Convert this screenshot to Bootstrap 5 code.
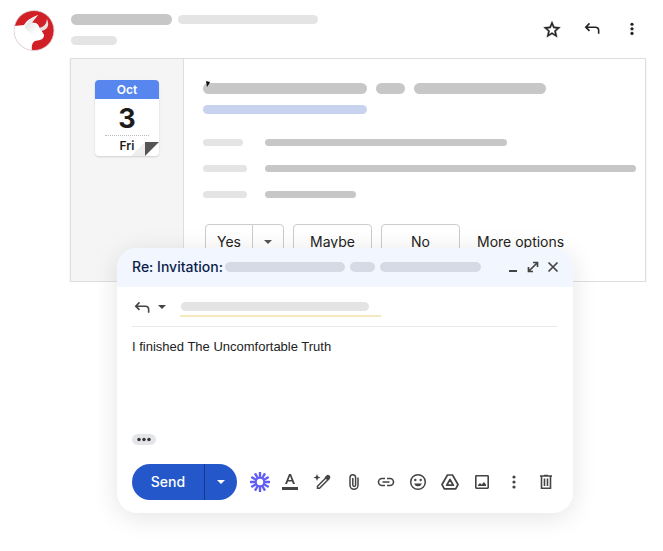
<!DOCTYPE html>
<html lang="en">
<head>
<meta charset="utf-8">
<meta name="viewport" content="width=device-width, initial-scale=1">
<title>Re: Invitation</title>
<link href="https://cdn.jsdelivr.net/npm/bootstrap@5.3.0/dist/css/bootstrap.min.css" rel="stylesheet">
<style>
  body { font-family: Inter, Roboto, sans-serif; font-size: 14px; line-height: 20px; color: #222; background: #fff; }
  svg { display: block; }
  .ico { border: 0; background: none; padding: 0; color: #444; width: 20px; height: 20px; flex: none; }
  .ico svg { width: 20px; height: 20px; fill: currentColor; }
  .mail-head { padding: 10px 21px 7px 13px; gap: 16px; }
  .mail-head .ico { color: #222; }
  .avatar { width: 42px; height: 41px; flex: none; }
  /* redacted text bars */
  .bar { display: block; border-radius: 8px; background: #c7c7c7; height: 11px; min-width: 0; }
  .bar-9 { height: 9px; }
  .bar-7 { height: 7px; }
  .bar-pale { background: #e4e4e4; }
  .bar-blue { background: #c8d3ef; }
  .bar-slate { background: #d5dae5; height: 10px; }
  .w-25px { width: 25px; } .w-29 { width: 29px; } .w-40 { width: 40px; } .w-44 { width: 44px; }
  .w-46 { width: 46px; } .w-91 { width: 91px; } .w-101 { width: 101px; } .w-120 { width: 120px; }
  .w-132 { width: 132px; } .w-140 { width: 140px; } .w-164 { width: 164px; } .w-188 { width: 188px; } .w-242 { width: 242px; }
  .sender { padding-top: 4px; }
  .sender-row { gap: 6px; padding-bottom: 11px; }
  .invite { margin: 0 17px 0 70px; border: 1px solid #dedede; box-shadow: 0 1px 2px #0000001a; }
  .side { width: 113px; flex: none; background: #f5f5f5; border-right: 1px solid #dedede; padding-top: 21px; }
  .cal { width: 64px; height: 76px; border-radius: 4px; background: #fff; box-shadow: 0 1px 2px #00000026; color: #1c1c1c; }
  .cal-month { background: #5787ee; color: #fff; height: 19px; line-height: 20px; font-size: 12px; font-weight: 600; border-radius: 4px 4px 0 0; }
  .cal-day { font-size: 27px; font-weight: 700; line-height: 36px; height: 36px; padding-top: 2px; }
  .cal-week { border-top: 1px dotted #bbb; margin: 0 10px; font-size: 12px; font-weight: 600; line-height: 20px; }
  .fold { position: absolute; right: 0; bottom: 0; }
  .detail { padding: 24px 9px 21px 19px; }
  .subject { gap: 9px; padding-bottom: 11px; }
  .tick { position: absolute; left: 3px; top: -2px; }
  .fields { padding-top: 25px; gap: 19px; }
  .fields dt { width: 62px; margin: 0; }
  .fields dd { margin: 0; min-width: 0; }
  .answers { padding: 26px 0 0 2px; gap: 9px; }
  .rsvp { border: 1px solid #ccc; border-radius: 4px; background: #fff; height: 36px; padding: 0; width: 79px; color: #222; }
  .rsvp-yes { width: 48px; border-radius: 4px 0 0 4px; }
  .rsvp-more { width: 32px; margin-left: -1px; border-radius: 0 4px 4px 0; color: #555; }
  .caret { width: 8px; height: 4px; fill: currentColor; margin: auto; }
  .more { color: #222; margin-left: 8px; }
  .compose { position: absolute; top: 248px; left: 117px; right: 90px; background: #fff; border-radius: 20px; box-shadow: 0 4px 26px #0000001c; }
  .compose-head { background: #f2f6fe; border-radius: 20px 20px 0 0; height: 39px; padding: 0 10px 1px 15px; color: #0b1e4b; }
  .compose-title { font-size: 14px; font-weight: 500; line-height: 20px; margin: 0; }
  .compose-bars { gap: 5px; margin-left: 2px; }
  .compose-body { padding: 0 16px 13px 15px; }
  .to-line { height: 40px; border-bottom: 1px solid #e9e9e9; }
  .reply-caret { margin: 0 14px 0 6px; color: #444; }
  .recipient { border-bottom: 2px solid #f5e8be; width: 201px; padding: 0 0 4px 1px; margin-top: 6px; }
  .message { border: 0; padding: 11px 0 0; width: 100%; height: 107px; resize: none; display: block; outline: 0; font: 13px/18px "Liberation Sans", Arial, sans-serif; color: #222; }
  .quote { border: 0; padding: 0; width: 24px; height: 11px; border-radius: 6px; background: #e3e5e9; color: #333; }
  .actions { padding-top: 19px; }
  .send, .send-more { border: 0; padding: 0; background: #2457ca; color: #fff; height: 36px; font-weight: 500; }
  .send { width: 72px; border-radius: 18px 0 0 18px; }
  .send-more { width: 33px; border-left: 1px solid #16398b; border-radius: 0 18px 18px 0; }
  .burst { color: #625df5; margin: 0 10px 0 13px; }
  .tools { gap: 12px; }
</style>
<script src="https://cdn.jsdelivr.net/npm/bootstrap@5.3.0/dist/js/bootstrap.bundle.min.js"></script>
</head>
<body>
<header class="mail-head d-flex">
  <svg class="avatar" viewBox="0 0 42 41" role="img" aria-label="Sender">
    <defs><clipPath id="disc"><circle cx="21" cy="20.500" r="20"/></clipPath>
    <linearGradient id="face" x1="0" y1="0" x2="1" y2="1"><stop offset="0" stop-color="#d9dadc"/><stop offset=".7" stop-color="#fff"/></linearGradient></defs>
    <g clip-path="url(#disc)"><rect width="42" height="41" fill="#d12026"/>
    <path d="M0 16 11 15Q14 9 25 5L20 11 19 13Q24 12 26 17L31 25Q31 29 27 30L22 31Q18 33 19 41H0Z" fill="#fff"/>
    <path d="M12 16Q15 10 25 5L20 11 19 13Q24 12 26 17L31 25 29 28Q20 27 12 18Z" fill="url(#face)"/>
    <path d="M34 9Q38 19 28 21L26 18Q33 17 34 9Z" fill="#e9dfe0"/></g>
    <circle cx="21" cy="20.500" r="20" fill="none" stroke="#ddd" stroke-width=".8"/>
  </svg>
  <div class="sender flex-fill">
    <div class="sender-row d-flex align-items-center"><span class="bar w-101"></span><span class="bar bar-9 bar-pale w-140"></span></div>
    <span class="bar bar-9 bar-pale w-46"></span>
  </div>
  <div class="d-flex pt-2 gap-3">
    <button class="ico me-1" aria-label="Star"><svg viewBox="0 0 24 24"><path d="m22 11.200-7.200-.6L12 4 9.200 10.600 2 11.200l5.500 4.700L5.800 23l6.200-3.700 6.200 3.700-1.600-7.100zM12 17.400l-3.800 2.300 1-4.300-3.300-2.900 4.400-.4L12 8.100l1.700 4 4.400.4-3.300 2.900 1 4.300z" stroke="currentColor" stroke-width=".5"/></svg></button>
    <button class="ico" aria-label="Reply"><svg viewBox="0 0 24 24"><path d="M9 6.500 4.500 11 9 15.500M4.500 11H16q4 0 4 4v4" fill="none" stroke="currentColor" stroke-width="1.900"/></svg></button>
    <button class="ico ms-1" aria-label="More"><svg viewBox="0 0 24 24"><circle cx="12" cy="7.500" r="1.900"/><circle cx="12" cy="13" r="1.900"/><circle cx="12" cy="18.500" r="1.900"/></svg></button>
  </div>
</header>

<main class="invite d-flex">
  <aside class="side">
    <div class="cal position-relative mx-auto text-center">
      <div class="cal-month">Oct</div><div class="cal-day">3</div><div class="cal-week">Fri</div>
      <svg class="fold" width="28" height="14" viewBox="0 0 28 14"><path d="M0 14 14 0V14Z" fill="#eee"/><path d="M14 0H28L14 14Z" fill="#555"/></svg>
    </div>
  </aside>
  <section class="detail flex-fill">
    <div class="subject d-flex position-relative"><span class="bar w-164"></span><span class="bar w-29"></span><span class="bar w-132"></span>
      <svg class="tick" width="4" height="6" viewBox="0 0 4 6"><path d="M0 0 4 1 3 3 1 6Z" fill="#111"/></svg></div>
    <span class="bar bar-9 bar-blue w-164"></span>
    <dl class="fields d-flex flex-column m-0">
      <div class="d-flex"><dt><span class="bar bar-7 bar-pale w-40"></span></dt><dd><span class="bar bar-7 w-242"></span></dd></div>
      <div class="d-flex"><dt><span class="bar bar-7 bar-pale w-44"></span></dt><dd class="flex-fill"><span class="bar bar-7"></span></dd></div>
      <div class="d-flex"><dt><span class="bar bar-7 bar-pale w-44"></span></dt><dd><span class="bar bar-7 w-91"></span></dd></div>
    </dl>
    <div class="answers d-flex align-items-center">
      <div class="d-flex"><button class="rsvp rsvp-yes">Yes</button><button class="rsvp rsvp-more" aria-label="Yes options"><svg class="caret" viewBox="0 0 8 4"><path d="M0 0H8L4 4Z"/></svg></button></div>
      <button class="rsvp">Maybe</button><button class="rsvp">No</button>
      <a href="#" class="more text-decoration-none text-nowrap">More options</a>
    </div>
  </section>
</main>

<section class="compose">
  <header class="compose-head d-flex align-items-center">
    <h1 class="compose-title text-nowrap">Re: Invitation:</h1>
    <span class="compose-bars d-flex flex-fill"><span class="bar bar-slate w-120"></span><span class="bar bar-slate w-25px"></span><span class="bar bar-slate w-101"></span></span>
    <button class="ico" aria-label="Minimize"><svg viewBox="0 0 20 20"><path d="M6 13h8v2H6z"/></svg></button>
    <button class="ico" aria-label="Full screen"><svg viewBox="0 0 20 20"><path d="M10 5.500h4.500V10M5.500 10v4.500H10M14 6 6 14" fill="none" stroke="currentColor" stroke-width="1.700"/></svg></button>
    <button class="ico" aria-label="Close"><svg viewBox="0 0 20 20"><path d="m5.500 5.500 9 9m0-9-9 9" fill="none" stroke="currentColor" stroke-width="1.700"/></svg></button>
  </header>
  <div class="compose-body">
    <div class="to-line d-flex align-items-center">
      <button class="ico" aria-label="Reply type"><svg viewBox="0 0 24 24"><path d="M9 6.500 4.500 11 9 15.500M4.500 11H16q4 0 4 4v4" fill="none" stroke="currentColor" stroke-width="1.900"/></svg></button>
      <svg class="caret reply-caret" viewBox="0 0 8 4"><path d="M0 0H8L4 4Z"/></svg>
      <div class="recipient"><span class="bar bar-9 bar-pale w-188"></span></div>
    </div>
    <textarea class="message" aria-label="Message body">I finished The Uncomfortable Truth</textarea>
    <button class="quote d-block" aria-label="Show trimmed content"><svg viewBox="0 0 24 11" width="24" height="11" fill="currentColor"><circle cx="7" cy="5.500" r="1.700"/><circle cx="12" cy="5.500" r="1.700"/><circle cx="17" cy="5.500" r="1.700"/></svg></button>
    <div class="actions d-flex align-items-center">
      <button class="send">Send</button><button class="send-more" aria-label="Send options"><svg class="caret" viewBox="0 0 8 4"><path d="M0 0H8L4 4Z"/></svg></button>
      <button class="ico burst" aria-label="Record video"><svg viewBox="-10 -10 20 20"><g fill="none" stroke="currentColor" stroke-width="2.400"><circle r="4.200" stroke-width="2"/><path d="M0-4V-10M0 4V10M-4 0H-10M4 0H10M2-3.500 5-8.700M-2-3.500-5-8.700M2 3.500 5 8.700M-2 3.500-5 8.700M3.500 2 8.700 5M3.500-2 8.700-5M-3.500 2-8.700 5M-3.500-2-8.700-5"/></g></svg></button>
      <div class="tools d-flex">
        <button class="ico" aria-label="Formatting"><svg viewBox="0 0 20 20"><path d="M2 15h16v3H2zM9 2h2l4 10h-2l-1-2.600H8L7 12H5zm1 1.900L8.500 8h3z"/></svg></button>
        <button class="ico" aria-label="Help me write"><svg viewBox="0 0 20 20"><path d="m5 2 1 2.500L8.500 5.500 6 6.500 5 9 4 6.500 1.500 5.500 4 4.500z"/><path d="m5.500 14.200 9-9 2 2-9 9h-2z" fill="none" stroke="currentColor" stroke-width="1.500"/><path d="m12.500 5.500 2.200-2.200q1.200-1 2.400 0l.8.800q1 1.200 0 2.400l-2.200 2.200z"/></svg></button>
        <button class="ico" aria-label="Attach files"><svg viewBox="0 0 20 20"><path d="M14 5.500v7.800a4 4 0 0 1-8 0V5.500a2.800 2.800 0 0 1 5.600 0v7.500a1.400 1.400 0 0 1-2.800 0V6" fill="none" stroke="currentColor" stroke-width="1.500"/></svg></button>
        <button class="ico" aria-label="Insert link"><svg viewBox="0 0 20 20"><path d="M9 6.500H6a3.500 3.500 0 0 0 0 7h3M11 6.500h3a3.500 3.500 0 0 1 0 7h-3M6.500 10h7" fill="none" stroke="currentColor" stroke-width="1.600"/></svg></button>
        <button class="ico" aria-label="Insert emoji"><svg viewBox="0 0 20 20"><circle cx="10" cy="10" r="7.300" fill="none" stroke="currentColor" stroke-width="1.500"/><circle cx="7.300" cy="8" r="1.200"/><circle cx="12.700" cy="8" r="1.200"/><path d="M6 11.500h8a4.300 4.300 0 0 1-8 0z"/></svg></button>
        <button class="ico" aria-label="Insert from Drive"><svg viewBox="0 0 20 20"><path d="M7.500 3h5l5.500 9.500-2.300 4.300H4.300L2 12.500zM10 7.500l-3.300 5.700h6.600z" fill="none" stroke="currentColor" stroke-width="1.700" stroke-linejoin="round"/></svg></button>
        <button class="ico" aria-label="Insert photo"><svg viewBox="0 0 20 20"><rect x="3.800" y="3.800" width="12.400" height="12.400" rx=".6" fill="none" stroke="currentColor" stroke-width="1.600"/><path d="M6 14v-1l2-2 1.500 1.500 2.500-2.500 2 2.500V14z"/></svg></button>
        <button class="ico" aria-label="More tools"><svg viewBox="0 0 20 20"><circle cx="10" cy="5" r="1.600"/><circle cx="10" cy="10" r="1.600"/><circle cx="10" cy="15" r="1.600"/></svg></button>
        <button class="ico" aria-label="Discard draft"><svg viewBox="0 0 20 20"><path d="M4 4h12M8 3.500h4M5.500 4.500v11.700h9V4.500M8.500 6.500v7.500M11.500 6.500v7.500" fill="none" stroke="currentColor" stroke-width="1.600"/></svg></button>
      </div>
    </div>
  </div>
</section>
</body>
</html>
